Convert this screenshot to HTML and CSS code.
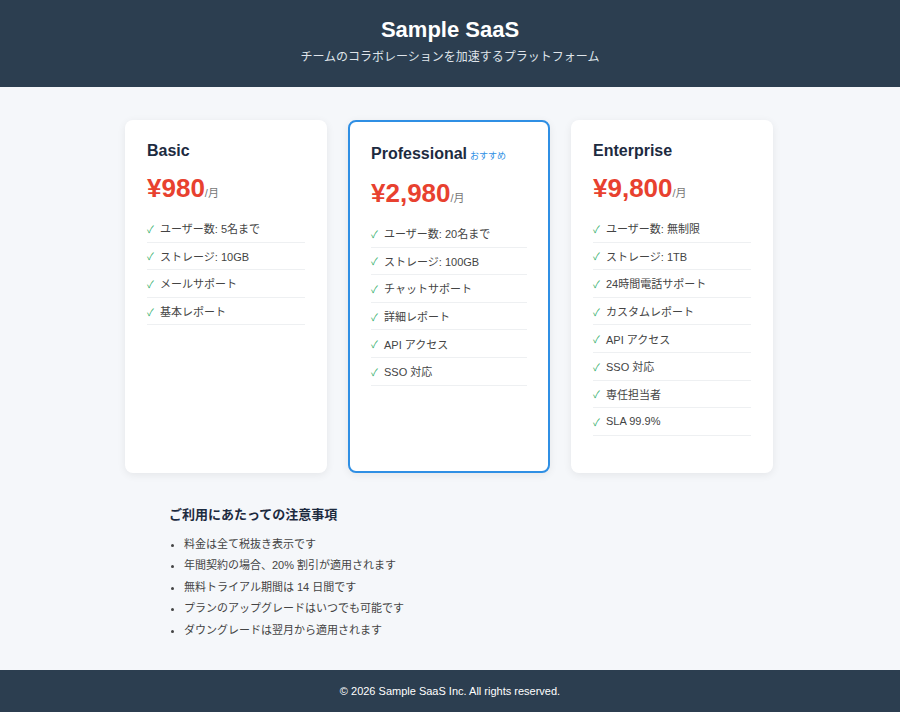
FILE: index.html
```html
<!DOCTYPE html>
<html lang="ja">
<head>
<meta charset="utf-8">
<title>Sample SaaS</title>
<link rel="stylesheet" href="styles.css">
</head>
<body>
<header class="site-header">
  <h1 class="site-title">Sample SaaS</h1>
  <p class="site-tagline">チームのコラボレーションを加速するプラットフォーム</p>
</header>
<main class="main">
  <section class="plans">
    <div class="plan">
      <h2 class="plan-name">Basic</h2>
      <div class="plan-price"><span class="amount">¥980</span><span class="per">/月</span></div>
      <ul class="features">
        <li><span class="check">✓</span>ユーザー数: 5名まで</li>
        <li><span class="check">✓</span>ストレージ: 10GB</li>
        <li><span class="check">✓</span>メールサポート</li>
        <li><span class="check">✓</span>基本レポート</li>
      </ul>
    </div>
    <div class="plan plan-featured">
      <h2 class="plan-name">Professional<span class="badge">おすすめ</span></h2>
      <div class="plan-price"><span class="amount">¥2,980</span><span class="per">/月</span></div>
      <ul class="features">
        <li><span class="check">✓</span>ユーザー数: 20名まで</li>
        <li><span class="check">✓</span>ストレージ: 100GB</li>
        <li><span class="check">✓</span>チャットサポート</li>
        <li><span class="check">✓</span>詳細レポート</li>
        <li><span class="check">✓</span>API アクセス</li>
        <li><span class="check">✓</span>SSO 対応</li>
      </ul>
    </div>
    <div class="plan">
      <h2 class="plan-name">Enterprise</h2>
      <div class="plan-price"><span class="amount">¥9,800</span><span class="per">/月</span></div>
      <ul class="features">
        <li><span class="check">✓</span>ユーザー数: 無制限</li>
        <li><span class="check">✓</span>ストレージ: 1TB</li>
        <li><span class="check">✓</span>24時間電話サポート</li>
        <li><span class="check">✓</span>カスタムレポート</li>
        <li><span class="check">✓</span>API アクセス</li>
        <li><span class="check">✓</span>SSO 対応</li>
        <li><span class="check">✓</span>専任担当者</li>
        <li><span class="check">✓</span>SLA 99.9%</li>
      </ul>
    </div>
  </section>
  <section class="notes">
    <h3 class="notes-title">ご利用にあたっての注意事項</h3>
    <ul class="notes-list">
      <li>料金は全て税抜き表示です</li>
      <li>年間契約の場合、20% 割引が適用されます</li>
      <li>無料トライアル期間は 14 日間です</li>
      <li>プランのアップグレードはいつでも可能です</li>
      <li>ダウングレードは翌月から適用されます</li>
    </ul>
  </section>
</main>
<footer class="site-footer">© 2026 Sample SaaS Inc. All rights reserved.</footer>
</body>
</html>
```
FILE: styles.css
```css
* { box-sizing: border-box; }
body {
  margin: 0;
  background: #f5f7fa;
  font-family: "Liberation Sans", "Noto Sans CJK JP", sans-serif;
  color: #333;
}
.site-header {
  background: #2c3e50;
  color: #fff;
  text-align: center;
  padding: 17px 0 22px;
  height: 87px;
}
.site-title {
  margin: 0;
  font-size: 22px;
  line-height: 26px;
  font-weight: bold;
}
.site-tagline {
  margin: 6px 0 0;
  font-size: 12px;
  line-height: 17px;
  color: #dfe4ea;
}
.main {
  padding: 33px 0 29px;
}
.plans {
  display: flex;
  justify-content: center;
  gap: 21px;
  padding-right: 2px;
}
.plan {
  width: 202px;
  background: #fff;
  border-radius: 8px;
  padding: 22px;
  box-shadow: 0 2px 8px rgba(0, 0, 0, 0.07);
}
.plan-featured {
  border: 2px solid #2f8fe4;
  padding: 23px 21px 22px;
}
.plan-name {
  margin: 0;
  font-size: 16px;
  line-height: 18px;
  font-weight: bold;
  color: #1d2b3f;
}
.badge {
  font-size: 9px;
  font-weight: normal;
  color: #2f8fe4;
  margin-left: 3px;
}
.plan-price {
  margin-top: 12px;
  height: 32px;
  line-height: 32px;
}
.amount {
  font-size: 26px;
  font-weight: bold;
  color: #e8412f;
}
.per {
  font-size: 11px;
  color: #777;
}
.features {
  list-style: none;
  margin: 11px 0 15px;
  padding: 0;
}
.features li {
  display: flex;
  align-items: center;
  height: 27.6px;
  font-size: 11px;
  border-bottom: 1px solid #eef0f2;
  color: #444;
}
.check {
  color: #2bae66;
  font-size: 10px;
  width: 13px;
  flex: none;
}
.notes {
  width: 562px;
  margin: 33px auto 0;
}
.notes-title {
  margin: 0;
  font-size: 13px;
  line-height: 18px;
  font-weight: bold;
  color: #1d2b3f;
}
.notes-list {
  margin: 10px 0 0;
  padding-left: 15px;
}
.notes-list li {
  font-size: 11px;
  line-height: 21.5px;
  color: #444;
}
.site-footer {
  background: #2c3e50;
  color: #fff;
  text-align: center;
  font-size: 11px;
  line-height: 42px;
  height: 42px;
}
```
